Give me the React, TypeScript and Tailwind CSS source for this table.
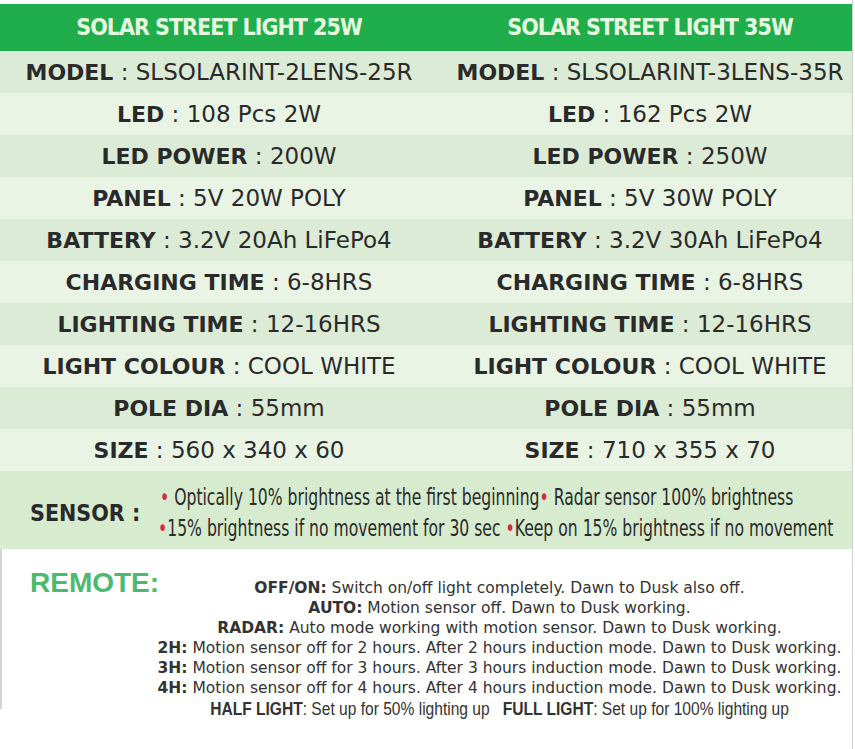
import React from "react";

type Spec = { label: string; value: string };

const rows: [Spec, Spec][] = [
  [
    { label: "MODEL", value: "SLSOLARINT-2LENS-25R" },
    { label: "MODEL", value: "SLSOLARINT-3LENS-35R" },
  ],
  [
    { label: "LED", value: "108 Pcs 2W" },
    { label: "LED", value: "162 Pcs 2W" },
  ],
  [
    { label: "LED POWER", value: "200W" },
    { label: "LED POWER", value: "250W" },
  ],
  [
    { label: "PANEL", value: "5V 20W POLY" },
    { label: "PANEL", value: "5V 30W POLY" },
  ],
  [
    { label: "BATTERY", value: "3.2V 20Ah LiFePo4" },
    { label: "BATTERY", value: "3.2V 30Ah LiFePo4" },
  ],
  [
    { label: "CHARGING TIME", value: "6-8HRS" },
    { label: "CHARGING TIME", value: "6-8HRS" },
  ],
  [
    { label: "LIGHTING TIME", value: "12-16HRS" },
    { label: "LIGHTING TIME", value: "12-16HRS" },
  ],
  [
    { label: "LIGHT COLOUR", value: "COOL WHITE" },
    { label: "LIGHT COLOUR", value: "COOL WHITE" },
  ],
  [
    { label: "POLE DIA", value: "55mm" },
    { label: "POLE DIA", value: "55mm" },
  ],
  [
    { label: "SIZE", value: "560 x 340 x 60" },
    { label: "SIZE", value: "710 x 355 x 70" },
  ],
];

const remoteLines: { key: string; text: string }[] = [
  { key: "OFF/ON:", text: " Switch on/off light completely. Dawn to Dusk also off." },
  { key: "AUTO:", text: " Motion sensor off. Dawn to Dusk working." },
  { key: "RADAR:", text: " Auto mode working with motion sensor. Dawn to Dusk working." },
  { key: "2H:", text: " Motion sensor off for 2 hours. After 2 hours induction mode. Dawn to Dusk working." },
  { key: "3H:", text: " Motion sensor off for 3 hours. After 3 hours induction mode. Dawn to Dusk working." },
  { key: "4H:", text: " Motion sensor off for 4 hours. After 4 hours induction mode. Dawn to Dusk working." },
];

function Cell({ spec, right }: { spec: Spec; right?: boolean }) {
  return (
    <div className={`flex items-center justify-center whitespace-nowrap ${right ? "pl-[10px]" : ""}`}>
      <span className="font-bold text-[22px]">{spec.label}</span>
      <span className="text-[23px]">&nbsp;:&nbsp;{spec.value}</span>
    </div>
  );
}

function Dot() {
  return <span className="text-[#d8283c]">•</span>;
}

export default function App() {
  return (
    <div className="w-[855px] h-[749px] bg-white overflow-hidden font-['DejaVu_Sans',sans-serif]">
      <div className="w-[853px] h-full border-r border-[#cfcfcf] pt-[4px]">
        {/* Header */}
        <div className="grid grid-cols-[438px_1fr] h-[47px] bg-[#1fae4b] text-[#e6f7e0] text-[23px] font-bold tracking-[-1px] font-['DejaVu_Sans_Condensed','DejaVu_Sans',sans-serif] font-stretch-condensed">
          <div className="flex items-center justify-center">SOLAR STREET LIGHT 25W</div>
          <div className="flex items-center justify-center pl-[10px]">SOLAR STREET LIGHT 35W</div>
        </div>

        {/* Spec rows */}
        {rows.map(([a, b], i) => (
          <div
            key={a.label}
            className={`grid grid-cols-[438px_1fr] h-[42px] text-[#2a2a2a] ${
              i % 2 === 0 ? "bg-[#dcebd5]" : "bg-[#e9f4e5]"
            }`}
          >
            <Cell spec={a} />
            <Cell spec={b} right />
          </div>
        ))}

        {/* Sensor */}
        <div className="flex items-center h-[78px] bg-[#d7ebcf] text-[#2a2a2a] overflow-hidden">
          <div className="w-[160px] shrink-0 pl-[30px] pt-[6px] text-[23px] font-bold font-['DejaVu_Sans_Condensed','DejaVu_Sans',sans-serif] font-stretch-condensed whitespace-nowrap">
            SENSOR :
          </div>
          <div className="flex flex-col pt-[6px] text-[23px] leading-[31px] font-['DejaVu_Sans_Condensed','DejaVu_Sans',sans-serif] font-stretch-condensed whitespace-nowrap">
            <span className="inline-block origin-left scale-x-[0.755]">
              <Dot /> Optically 10% brightness at the first beginning<Dot /> Radar sensor 100% brightness
            </span>
            <span className="inline-block origin-left scale-x-[0.755] -ml-[2px]">
              <Dot />15% brightness if no movement for 30 sec <Dot />Keep on 15% brightness if no movement
            </span>
          </div>
        </div>

        {/* Remote */}
        <div className="flex h-[160px] border-l-2 border-[#d4d4d4] text-[#333333]">
          <div className="w-[145px] shrink-0 pl-[28px] pt-[18px] text-[28px] leading-[32px] font-bold text-[#4cb96e] font-['Liberation_Sans',Arial,sans-serif]">
            REMOTE:
          </div>
          <div className="flex-1 flex flex-col items-center pt-[29px] text-[15.5px] leading-[20px]">
            {remoteLines.map((l) => (
              <div key={l.key} className="whitespace-nowrap">
                <span className="font-bold">{l.key}</span>
                {l.text}
              </div>
            ))}
            <div className="whitespace-nowrap inline-block scale-x-[0.865] text-[18px] leading-[22px] font-['Liberation_Sans',Arial,sans-serif]">
              <span className="font-bold">HALF LIGHT</span>: Set up for 50% lighting up&nbsp;&nbsp;&nbsp;
              <span className="font-bold">FULL LIGHT</span>: Set up for 100% lighting up
            </div>
          </div>
        </div>
      </div>
    </div>
  );
}
